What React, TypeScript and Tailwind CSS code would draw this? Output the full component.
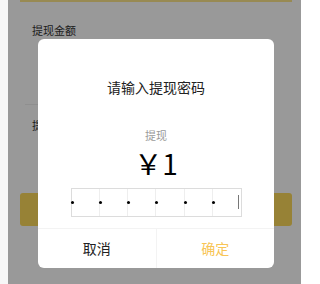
import React from 'react';

const font = { fontFamily: '"Noto Sans CJK SC", "Noto Sans", sans-serif' };

function PasswordBox({ length = 6 }: { length?: number }) {
  return (
    <div className="mx-auto flex h-[29px] w-[171px] border border-[#dcdcdc]">
      {Array.from({ length }).map((_, i) => (
        <div
          key={i}
          className={`relative flex-1 ${i > 0 ? 'border-l border-[#eeeeee]' : ''}`}
        >
          {/* 圆点在格子左侧 */}
          <span className="absolute left-[-1px] top-[12px] h-[3px] w-[3px] rounded-full bg-black" />
          {i === length - 1 && (
            <span className="absolute right-[1px] top-[6px] h-[14px] w-px bg-[#777]" />
          )}
        </div>
      ))}
    </div>
  );
}

export default function App() {
  return (
    <div className="relative h-[284px] w-[301px] overflow-hidden bg-white" style={font}>
      {/* 底层页面 */}
      <div className="flex h-full flex-col">
        <div className="ml-[20px] h-[2px] w-[272px] bg-[#fde68a]" />
        <div className="ml-[32px] mt-[20px] text-[11px] leading-[16px] text-[#333]">提现金额</div>
        <div className="ml-[25px] mt-[66px] h-px w-[240px] bg-[#eeeeee]" />
        <div className="ml-[32px] mt-[12px] text-[11px] leading-[16px] text-[#333]">提现密码</div>
        <div className="ml-[20px] mt-[60px] h-[33px] w-[272px] rounded-[3px] bg-[#fcd95a]" />
      </div>

      {/* 遮罩 */}
      <div className="absolute inset-y-0 left-[8px] right-0 bg-black/40" />
      <div className="absolute inset-y-0 left-0 w-[8px] bg-[#f7f7f7]" />

      {/* 弹窗 */}
      <div className="absolute left-[38px] top-[39px] flex h-[229px] w-[236px] flex-col overflow-hidden rounded-[6px] bg-white">
        <div className="mt-[38px] text-center text-[14px] leading-[20px] text-[#222]">请输入提现密码</div>
        <div className="mt-[30px] text-center text-[11px] leading-[16px] text-[#999]">提现</div>
        <div className="mt-[2px] text-center text-[28px] leading-[36px] text-black">￥1</div>
        <div className="mt-[7px]">
          <PasswordBox />
        </div>
        <div className="mt-[11px] flex flex-1 border-t border-[#f3f3f3]">
          <button className="flex-1 text-[14px] text-[#222]">取消</button>
          <button className="flex-1 border-l border-[#f3f3f3] text-[14px] text-[#f8c556]">确定</button>
        </div>
      </div>
    </div>
  );
}
